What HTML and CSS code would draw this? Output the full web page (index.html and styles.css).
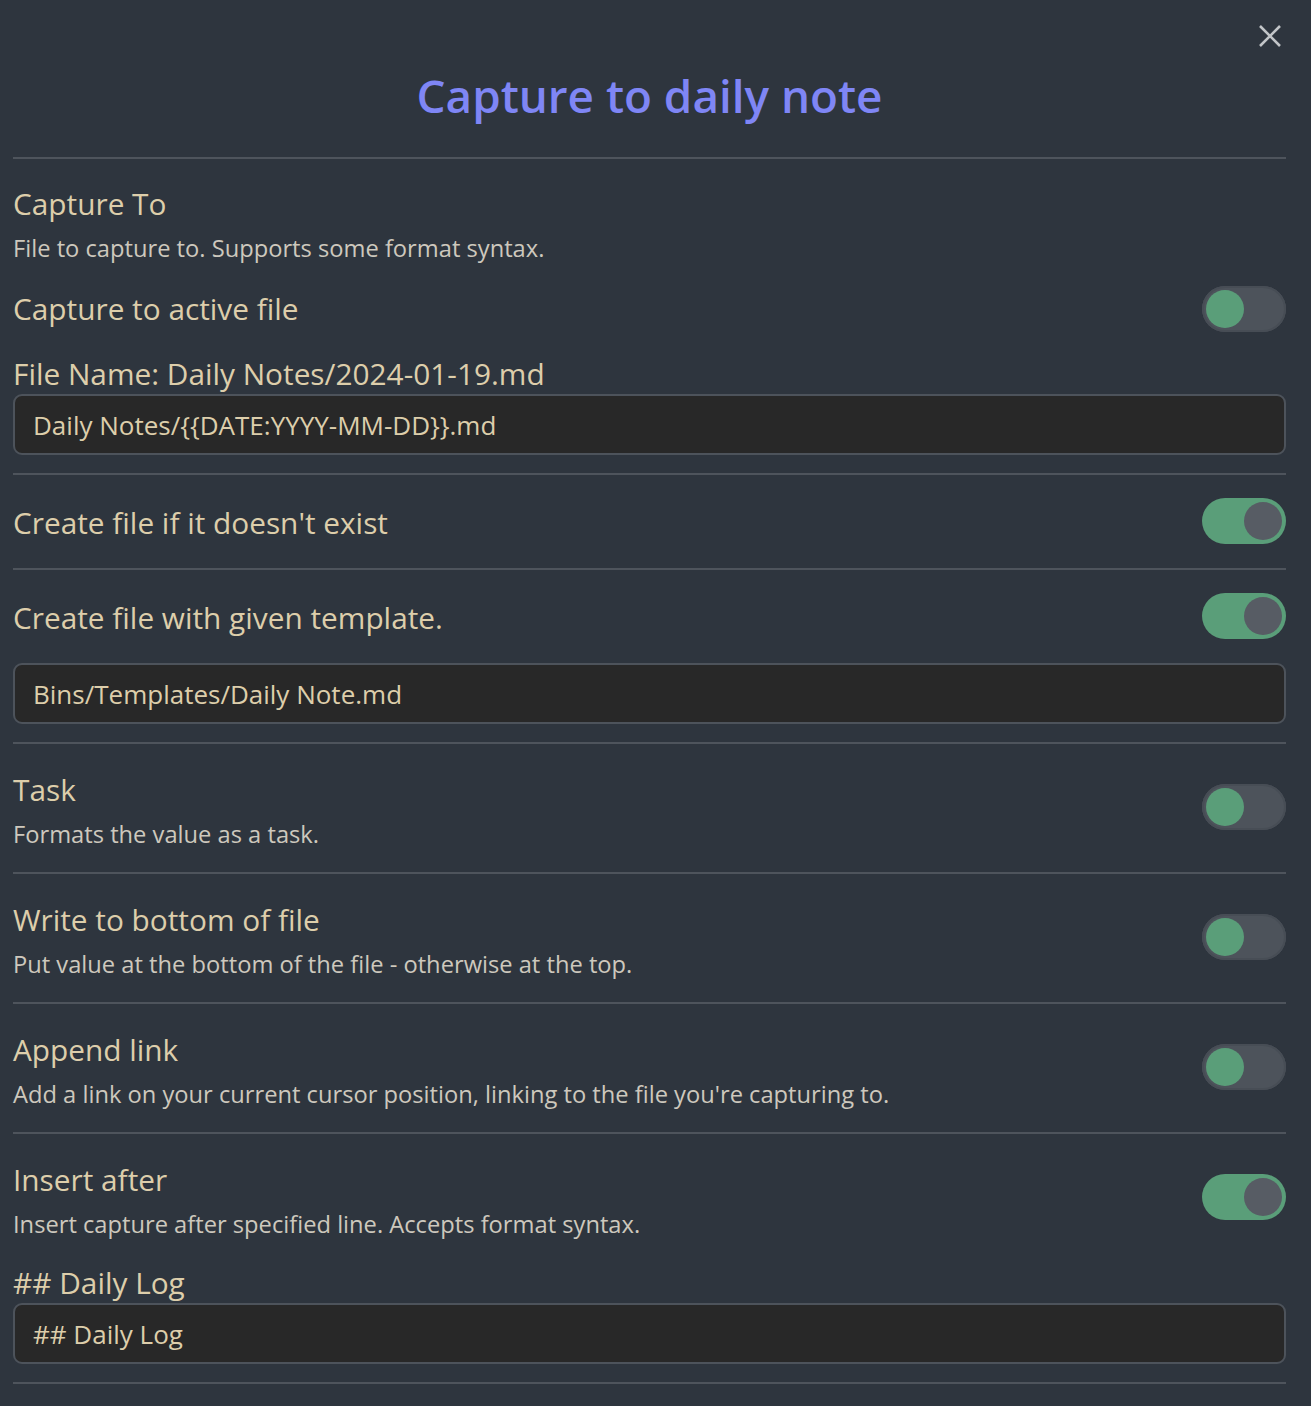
FILE: index.html
```html
<!DOCTYPE html>
<html lang="en">
<head>
<meta charset="utf-8">
<title>Capture to daily note</title>
<link rel="stylesheet" href="styles.css">
</head>
<body>
<div class="modal">
  <button class="close" aria-label="Close">
    <svg viewBox="0 0 24 24" width="24" height="24"><path d="M2 2 L22 22 M22 2 L2 22" stroke="#c2c5c8" stroke-width="2.6" stroke-linecap="butt" fill="none"/></svg>
  </button>
  <header class="head"><h1 class="title">Capture to daily note</h1></header>

  <section class="sec sec-first">
    <div class="name">Capture To</div>
    <div class="desc">File to capture to. Supports some format syntax.</div>
    <div class="row row-active">
      <div class="name">Capture to active file</div>
      <div class="toggle"><span class="knob"></span></div>
    </div>
    <div class="flabel flabel-file">File Name: Daily Notes/2024-01-19.md</div>
    <div class="input">Daily Notes/{{DATE:YYYY-MM-DD}}.md</div>
  </section>

  <section class="sec sec-single">
    <div class="row">
      <div class="name name-low">Create file if it doesn't exist</div>
      <div class="toggle on"><span class="knob"></span></div>
    </div>
  </section>

  <section class="sec sec-template">
    <div class="row">
      <div class="name name-low">Create file with given template.</div>
      <div class="toggle on"><span class="knob"></span></div>
    </div>
    <div class="input input-template">Bins/Templates/Daily Note.md</div>
  </section>

  <section class="sec sec-double">
    <div class="row row-top">
      <div class="info">
        <div class="name">Task</div>
        <div class="desc">Formats the value as a task.</div>
      </div>
      <div class="toggle"><span class="knob"></span></div>
    </div>
  </section>

  <section class="sec sec-double">
    <div class="row row-top">
      <div class="info">
        <div class="name">Write to bottom of file</div>
        <div class="desc">Put value at the bottom of the file - otherwise at the top.</div>
      </div>
      <div class="toggle"><span class="knob"></span></div>
    </div>
  </section>

  <section class="sec sec-double">
    <div class="row row-top">
      <div class="info">
        <div class="name">Append link</div>
        <div class="desc">Add a link on your current cursor position, linking to the file you're capturing to.</div>
      </div>
      <div class="toggle"><span class="knob"></span></div>
    </div>
  </section>

  <section class="sec sec-insert">
    <div class="row row-top">
      <div class="info">
        <div class="name">Insert after</div>
        <div class="desc">Insert capture after specified line. Accepts format syntax.</div>
      </div>
      <div class="toggle on"><span class="knob"></span></div>
    </div>
    <div class="flabel flabel-log">## Daily Log</div>
    <div class="input">## Daily Log</div>
  </section>
  <div class="endline"></div>
</div>
</body>
</html>
```

FILE: styles.css
```css
* { box-sizing: border-box; }
html, body {
  margin: 0;
  padding: 0;
  background: #2e353e;
}
body {
  font-family: "Open Sans", "Noto Sans", "Liberation Sans", sans-serif;
  color: #ddceab;
  width: 1311px;
  height: 1406px;
  overflow: hidden;
}
.modal {
  position: relative;
  padding: 0 25px 0 13px;
}
.close {
  position: absolute;
  top: 24px;
  right: 29px;
  width: 24px;
  height: 24px;
  padding: 0;
  border: 0;
  background: transparent;
  display: block;
}
.close svg { display: block; }
.head {
  height: 157px;
  display: flex;
  justify-content: center;
}
.title {
  margin: 0;
  padding-top: 62px;
  font-size: 45.8px;
  line-height: 66px;
  font-weight: 600;
  color: #7f86f5;
}
.sec {
  border-top: 2px solid #4e545c;
  display: flex;
  flex-direction: column;
}
.name {
  font-size: 29.8px;
  line-height: 44px;
  color: #ddceab;
  white-space: nowrap;
}
.name-low { line-height: 40px; padding-top: 4px; }
.desc {
  font-size: 23.7px;
  line-height: 44px;
  color: #cdc8bd;
  white-space: nowrap;
}
.row {
  display: flex;
  align-items: center;
  justify-content: space-between;
}
.row-top { align-items: flex-start; }
.row-top .toggle { margin-top: 16px; }
.info { display: flex; flex-direction: column; }
.toggle {
  width: 84px;
  height: 46px;
  border-radius: 23px;
  background: #4d535b;
  box-shadow: inset 0 0 0 2px #474d55;
  position: relative;
  flex: none;
}
.toggle .knob {
  position: absolute;
  top: 4px;
  left: 4px;
  width: 38px;
  height: 38px;
  border-radius: 50%;
  background: #5a9e79;
}
.toggle.on { background: #5a9e79; box-shadow: none; }
.toggle.on .knob { left: 42px; background: #575c64; }
.flabel {
  font-size: 29.8px;
  line-height: 40px;
  color: #ddceab;
  white-space: nowrap;
}
.input {
  height: 61px;
  border: 2px solid #4d535b;
  border-radius: 9px;
  background: #282828;
  padding: 2px 18px 0;
  font-size: 26px;
  line-height: 55px;
  color: #ddceab;
  white-space: nowrap;
}
.sec-first { padding: 23px 0 18px; }
.row-active { margin-top: 16px; }
.flabel-file { margin-top: 22px; }
.sec-single { padding: 23px 0 24px; }
.sec-template { padding: 23px 0 18px; }
.input-template { margin-top: 24px; }
.sec-double { padding: 24px 0 16px; }
.sec-insert { padding: 24px 0 18px; }
.flabel-log { margin-top: 17px; }
.endline { border-top: 2px solid #4e545c; }
```
